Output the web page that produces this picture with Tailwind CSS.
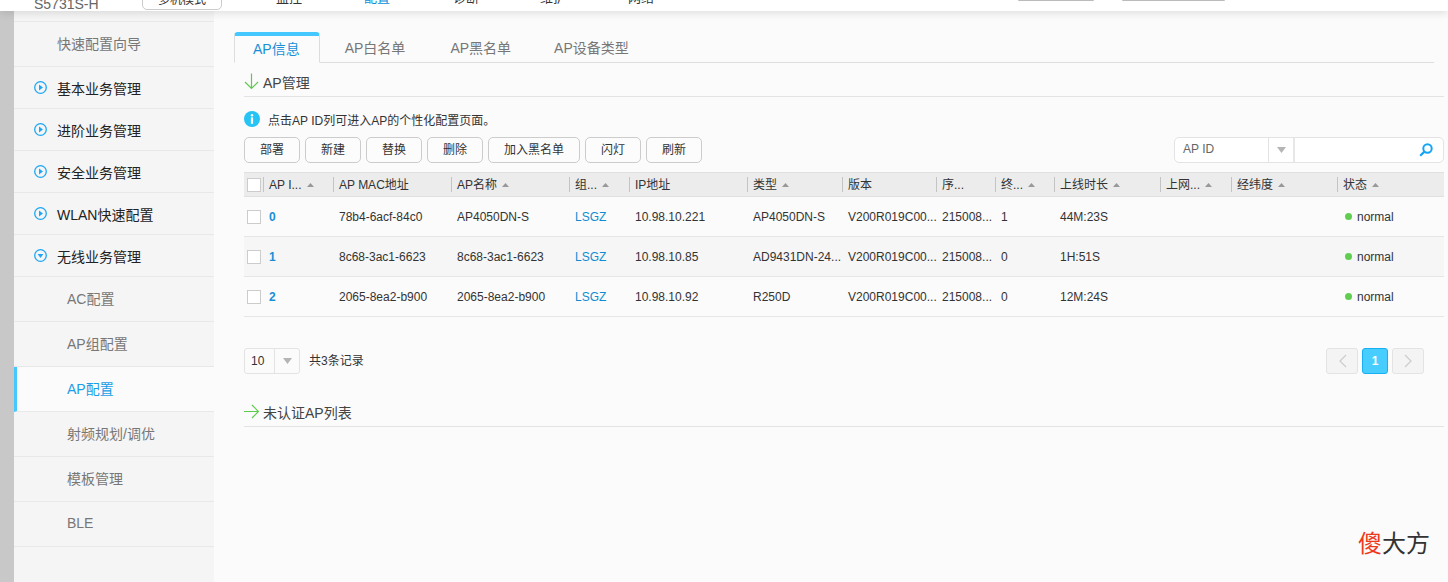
<!DOCTYPE html>
<html lang="zh">
<head>
<meta charset="utf-8">
<title>AP配置</title>
<script src="https://cdn.jsdelivr.net/npm/@tailwindcss/browser@4"></script>
</head>
<body class="w-[1448px] h-[582px] overflow-hidden bg-[#fbfbfb] font-['Liberation_Sans','Noto_Sans_CJK_SC',sans-serif] text-[12px] text-[#333]">
<div class="relative h-[582px] flex flex-col">
  <header class="relative z-10 h-[11px] shrink-0 overflow-hidden bg-white shadow-[0_2px_8px_rgba(0,0,0,0.12)] flex items-end text-[14px]">
    <span class="ml-[34px] w-[108px] text-[#666] leading-[20px] mb-[-3px] shrink-0">S5731S-H</span>
    <span class="w-[80px] h-[20px] mb-[1px] shrink-0 border border-[#ccc] rounded-[5px] text-[12px] text-[#333] leading-[18px] text-center">多机模式</span>
    <nav class="ml-[54px] flex leading-[20px] mb-[3px] text-[13px] text-[#333] shrink-0">
      <span class="w-[88px]">监控</span>
      <span class="w-[89px] text-[#0a8fd8]">配置</span>
      <span class="w-[87px]">诊断</span>
      <span class="w-[88px]">维护</span>
      <span class="w-[40px]">网络</span>
    </nav>
    <div class="ml-[350px] flex items-start self-start gap-[28px] shrink-0">
      <span class="w-[76px] h-[1px] bg-[#bbb] rounded-b"></span>
      <span class="w-[103px] h-[1px] bg-[#bbb] rounded-b"></span>
    </div>
  </header>
  <div class="flex flex-1 min-h-0">
    <div class="w-[14px] bg-[#c8c8c8] shrink-0"></div>
    <aside class="w-[200px] shrink-0 bg-[#f5f5f5] pt-[10px] text-[14px]">
      <div class="h-[46px] border-y border-[#e8e8e8] pl-[43px] flex items-center text-[#777]">快速配置向导</div>
      <div class="h-[42px] border-b border-[#e8e8e8] pl-[20px] pt-[3px] flex items-center gap-[10px] text-[#222]"><svg class="w-[13px] h-[13px] -mt-[3px]" viewBox="0 0 13 13"><circle cx="6.5" cy="6.5" r="5.8" fill="none" stroke="#1ea7f5" stroke-width="1.3"/><path d="M5 3.6 9 6.5 5 9.4z" fill="#1ea7f5"/></svg>基本业务管理</div>
      <div class="h-[42px] border-b border-[#e8e8e8] pl-[20px] pt-[3px] flex items-center gap-[10px] text-[#222]"><svg class="w-[13px] h-[13px] -mt-[3px]" viewBox="0 0 13 13"><circle cx="6.5" cy="6.5" r="5.8" fill="none" stroke="#1ea7f5" stroke-width="1.3"/><path d="M5 3.6 9 6.5 5 9.4z" fill="#1ea7f5"/></svg>进阶业务管理</div>
      <div class="h-[42px] border-b border-[#e8e8e8] pl-[20px] pt-[3px] flex items-center gap-[10px] text-[#222]"><svg class="w-[13px] h-[13px] -mt-[3px]" viewBox="0 0 13 13"><circle cx="6.5" cy="6.5" r="5.8" fill="none" stroke="#1ea7f5" stroke-width="1.3"/><path d="M5 3.6 9 6.5 5 9.4z" fill="#1ea7f5"/></svg>安全业务管理</div>
      <div class="h-[42px] border-b border-[#e8e8e8] pl-[20px] pt-[3px] flex items-center gap-[10px] text-[#222]"><svg class="w-[13px] h-[13px] -mt-[3px]" viewBox="0 0 13 13"><circle cx="6.5" cy="6.5" r="5.8" fill="none" stroke="#1ea7f5" stroke-width="1.3"/><path d="M5 3.6 9 6.5 5 9.4z" fill="#1ea7f5"/></svg>WLAN快速配置</div>
      <div class="h-[42px] border-b border-[#e8e8e8] pl-[20px] pt-[3px] flex items-center gap-[10px] text-[#222]"><svg class="w-[13px] h-[13px] -mt-[3px]" viewBox="0 0 13 13"><circle cx="6.5" cy="6.5" r="5.8" fill="none" stroke="#1ea7f5" stroke-width="1.3"/><path d="M3.6 5 9.4 5 6.5 9z" fill="#1ea7f5"/></svg>无线业务管理</div>
      <div class="h-[45px] border-b border-[#e8e8e8] pl-[53px] flex items-center text-[#777]">AC配置</div>
      <div class="h-[45px] border-b border-[#e8e8e8] pl-[53px] flex items-center text-[#777]">AP组配置</div>
      <div class="h-[45px] border-b border-[#e8e8e8] border-l-[3px] border-l-[#45c8ff] pl-[50px] flex items-center text-[#1a9ee6] bg-[#fbfbfb]">AP配置</div>
      <div class="h-[45px] border-b border-[#e8e8e8] pl-[53px] flex items-center text-[#777]">射频规划/调优</div>
      <div class="h-[45px] border-b border-[#e8e8e8] pl-[53px] flex items-center text-[#777]">模板管理</div>
      <div class="h-[45px] border-b border-[#e8e8e8] pl-[53px] pb-[2px] flex items-center text-[#777]">BLE</div>
    </aside>
    <main class="flex-1 min-w-0 pl-[20px] pr-[4px] pt-[21px]">
      <div class="flex h-[31px] mr-[10px] border-b border-[#ddd] text-[14px] text-[#777]">
        <div class="h-[31px] pl-[18px] pr-[19px] mr-[6px] border border-[#ddd] border-t-[4px] border-t-[#45c8ff] border-b-[#fbfbfb] rounded-t-[4px] text-[#1a8fd6] leading-[27px]">AP信息</div>
        <div class="px-[19px] mr-[7px] leading-[33px]">AP白名单</div>
        <div class="px-[19px] mr-[5px] leading-[33px]">AP黑名单</div>
        <div class="px-[19px] leading-[33px]">AP设备类型</div>
      </div>
      <div class="ml-[10px]">
        <div class="h-[34px] border-b border-[#e3e3e3] flex items-center text-[14px] text-[#444] pt-[7px]">
          <svg class="w-[15px] h-[17px] mr-[4px] -mt-[3px]" viewBox="0 0 15 17"><path d="M7.5 0.5V15.5M1 9 7.5 15.5 14 9" fill="none" stroke="#5ecb4c" stroke-width="1.2"/></svg>AP管理
        </div>
        <div class="h-[39px] flex items-center pt-[8px] text-[#333]">
          <svg class="w-[16px] h-[16px] mr-[8px] -mt-[3px]" viewBox="0 0 16 16"><circle cx="8" cy="8" r="8" fill="#25c4f5"/><circle cx="8" cy="4.2" r="1.2" fill="#fff"/><rect x="6.9" y="6.4" width="2.2" height="6.4" fill="#fff"/></svg>点击AP ID列可进入AP的个性化配置页面。
        </div>
        <div class="h-[26px] mt-[1px] flex justify-between">
          <div class="flex gap-[5px] text-[12px] text-[#333]">
            <button class="w-[56px] h-[26px] border border-[#ccc] rounded-[5px] bg-[#fcfcfc]">部署</button>
            <button class="w-[56px] h-[26px] border border-[#ccc] rounded-[5px] bg-[#fcfcfc]">新建</button>
            <button class="w-[56px] h-[26px] border border-[#ccc] rounded-[5px] bg-[#fcfcfc]">替换</button>
            <button class="w-[56px] h-[26px] border border-[#ccc] rounded-[5px] bg-[#fcfcfc]">删除</button>
            <button class="w-[92px] h-[26px] border border-[#ccc] rounded-[5px] bg-[#fcfcfc]">加入黑名单</button>
            <button class="w-[56px] h-[26px] border border-[#ccc] rounded-[5px] bg-[#fcfcfc]">闪灯</button>
            <button class="w-[56px] h-[26px] border border-[#ccc] rounded-[5px] bg-[#fcfcfc]">刷新</button>
          </div>
          <div class="w-[270px] h-[26px] border border-[#e3e3e3] rounded-[5px] bg-white flex items-center text-[#666]">
            <span class="w-[93px] pl-[8px] -mt-[2px]">AP ID</span>
            <span class="w-[25px] h-[24px] border-l border-[#e3e3e3] flex items-center justify-center"><svg class="w-[9px] h-[6px]" viewBox="0 0 9 6"><path d="M0 0H9L4.5 6z" fill="#b5b5b5"/></svg></span>
            <span class="flex-1 h-[24px] border-l-2 border-[#e8e8e8] flex items-center justify-end pr-[10px]"><svg class="w-[14px] h-[14px]" viewBox="0 0 14 14"><circle cx="8.5" cy="5.5" r="4.2" fill="none" stroke="#12a5f5" stroke-width="2"/><path d="M5.4 8.6 1.2 12.8" stroke="#12a5f5" stroke-width="2.2"/></svg></span>
          </div>
        </div>
        <table class="mt-[9px] w-[1200px] table-fixed border-collapse text-[12px] text-[#333]">
          <colgroup>
            <col class="w-[19px]"><col class="w-[70px]"><col class="w-[118px]"><col class="w-[118px]"><col class="w-[60px]"><col class="w-[118px]"><col class="w-[95px]"><col class="w-[94px]"><col class="w-[59px]"><col class="w-[59px]"><col class="w-[106px]"><col class="w-[71px]"><col class="w-[106px]"><col class="w-[107px]">
          </colgroup>
          <thead>
            <tr class="h-[24px] bg-[#ececec] border-y border-[#e0e0e0] font-normal text-left">
              <th class="font-normal p-0"><span class="ml-[3px] block w-[14px] h-[14px] border border-[#ccc] bg-white"></span></th>
              <th class="font-normal p-0"><div class="h-[15px] border-l border-[#c4c4c4] pl-[5px] flex items-center gap-[6px] whitespace-nowrap">AP I...<svg class="w-[7px] h-[4px]" viewBox="0 0 7 4"><path d="M0 4H7L3.5 0z" fill="#999"/></svg></div></th>
              <th class="font-normal p-0"><div class="h-[15px] border-l border-[#c4c4c4] pl-[5px] flex items-center whitespace-nowrap">AP MAC地址</div></th>
              <th class="font-normal p-0"><div class="h-[15px] border-l border-[#c4c4c4] pl-[5px] flex items-center gap-[5px] whitespace-nowrap">AP名称<svg class="w-[7px] h-[4px]" viewBox="0 0 7 4"><path d="M0 4H7L3.5 0z" fill="#999"/></svg></div></th>
              <th class="font-normal p-0"><div class="h-[15px] border-l border-[#c4c4c4] pl-[5px] flex items-center gap-[5px] whitespace-nowrap">组...<svg class="w-[7px] h-[4px]" viewBox="0 0 7 4"><path d="M0 4H7L3.5 0z" fill="#999"/></svg></div></th>
              <th class="font-normal p-0"><div class="h-[15px] border-l border-[#c4c4c4] pl-[5px] flex items-center whitespace-nowrap">IP地址</div></th>
              <th class="font-normal p-0"><div class="h-[15px] border-l border-[#c4c4c4] pl-[5px] flex items-center gap-[5px] whitespace-nowrap">类型<svg class="w-[7px] h-[4px]" viewBox="0 0 7 4"><path d="M0 4H7L3.5 0z" fill="#999"/></svg></div></th>
              <th class="font-normal p-0"><div class="h-[15px] border-l border-[#c4c4c4] pl-[5px] flex items-center whitespace-nowrap">版本</div></th>
              <th class="font-normal p-0"><div class="h-[15px] border-l border-[#c4c4c4] pl-[5px] flex items-center whitespace-nowrap">序...</div></th>
              <th class="font-normal p-0"><div class="h-[15px] border-l border-[#c4c4c4] pl-[5px] flex items-center gap-[5px] whitespace-nowrap">终...<svg class="w-[7px] h-[4px]" viewBox="0 0 7 4"><path d="M0 4H7L3.5 0z" fill="#999"/></svg></div></th>
              <th class="font-normal p-0"><div class="h-[15px] border-l border-[#c4c4c4] pl-[5px] flex items-center gap-[5px] whitespace-nowrap">上线时长<svg class="w-[7px] h-[4px]" viewBox="0 0 7 4"><path d="M0 4H7L3.5 0z" fill="#999"/></svg></div></th>
              <th class="font-normal p-0"><div class="h-[15px] border-l border-[#c4c4c4] pl-[5px] flex items-center gap-[5px] whitespace-nowrap">上网...<svg class="w-[7px] h-[4px]" viewBox="0 0 7 4"><path d="M0 4H7L3.5 0z" fill="#999"/></svg></div></th>
              <th class="font-normal p-0"><div class="h-[15px] border-l border-[#c4c4c4] pl-[5px] flex items-center gap-[5px] whitespace-nowrap">经纬度<svg class="w-[7px] h-[4px]" viewBox="0 0 7 4"><path d="M0 4H7L3.5 0z" fill="#999"/></svg></div></th>
              <th class="font-normal p-0"><div class="h-[15px] border-l border-[#c4c4c4] pl-[5px] flex items-center gap-[5px] whitespace-nowrap">状态<svg class="w-[7px] h-[4px]" viewBox="0 0 7 4"><path d="M0 4H7L3.5 0z" fill="#999"/></svg></div></th>
            </tr>
          </thead>
          <tbody>
            <tr class="h-[40px] border-b border-[#e6e6e6]">
              <td class="p-0"><span class="ml-[3px] block w-[14px] h-[14px] border border-[#ccc] bg-white"></span></td>
              <td class="p-0 pl-[6px] text-[#1a8fd6] font-bold">0</td><td class="p-0 pl-[6px]">78b4-6acf-84c0</td><td class="p-0 pl-[6px]">AP4050DN-S</td><td class="p-0 pl-[6px] text-[#0f8cd2]">LSGZ</td><td class="p-0 pl-[6px]">10.98.10.221</td><td class="p-0 pl-[6px] whitespace-nowrap">AP4050DN-S</td><td class="p-0 pl-[6px] whitespace-nowrap">V200R019C00...</td><td class="p-0 pl-[6px] whitespace-nowrap">215008...</td><td class="p-0 pl-[6px]">1</td><td class="p-0 pl-[6px]">44M:23S</td><td class="p-0"></td><td class="p-0"></td>
              <td class="p-0 pl-[8px]"><span class="flex items-center gap-[5px]"><span class="w-[7px] h-[7px] rounded-full bg-[#5fce50]"></span>normal</span></td>
            </tr>
            <tr class="h-[40px] border-b border-[#e6e6e6] bg-[#f6f6f6]">
              <td class="p-0"><span class="ml-[3px] block w-[14px] h-[14px] border border-[#ccc] bg-white"></span></td>
              <td class="p-0 pl-[6px] text-[#1a8fd6] font-bold">1</td><td class="p-0 pl-[6px]">8c68-3ac1-6623</td><td class="p-0 pl-[6px]">8c68-3ac1-6623</td><td class="p-0 pl-[6px] text-[#0f8cd2]">LSGZ</td><td class="p-0 pl-[6px]">10.98.10.85</td><td class="p-0 pl-[6px] whitespace-nowrap">AD9431DN-24...</td><td class="p-0 pl-[6px] whitespace-nowrap">V200R019C00...</td><td class="p-0 pl-[6px] whitespace-nowrap">215008...</td><td class="p-0 pl-[6px]">0</td><td class="p-0 pl-[6px]">1H:51S</td><td class="p-0"></td><td class="p-0"></td>
              <td class="p-0 pl-[8px]"><span class="flex items-center gap-[5px]"><span class="w-[7px] h-[7px] rounded-full bg-[#5fce50]"></span>normal</span></td>
            </tr>
            <tr class="h-[40px] border-b border-[#e6e6e6]">
              <td class="p-0"><span class="ml-[3px] block w-[14px] h-[14px] border border-[#ccc] bg-white"></span></td>
              <td class="p-0 pl-[6px] text-[#1a8fd6] font-bold">2</td><td class="p-0 pl-[6px]">2065-8ea2-b900</td><td class="p-0 pl-[6px]">2065-8ea2-b900</td><td class="p-0 pl-[6px] text-[#0f8cd2]">LSGZ</td><td class="p-0 pl-[6px]">10.98.10.92</td><td class="p-0 pl-[6px] whitespace-nowrap">R250D</td><td class="p-0 pl-[6px] whitespace-nowrap">V200R019C00...</td><td class="p-0 pl-[6px] whitespace-nowrap">215008...</td><td class="p-0 pl-[6px]">0</td><td class="p-0 pl-[6px]">12M:24S</td><td class="p-0"></td><td class="p-0"></td>
              <td class="p-0 pl-[8px]"><span class="flex items-center gap-[5px]"><span class="w-[7px] h-[7px] rounded-full bg-[#5fce50]"></span>normal</span></td>
            </tr>
          </tbody>
        </table>
        <div class="mt-[31px] h-[26px] flex items-center">
          <div class="w-[56px] h-[26px] border border-[#e3e3e3] rounded-[3px] flex items-center text-[#333]">
            <span class="w-[29px] pl-[6px]">10</span>
            <span class="flex-1 h-[24px] border-l border-[#e3e3e3] flex items-center justify-center"><svg class="w-[9px] h-[6px]" viewBox="0 0 9 6"><path d="M0 0H9L4.5 6z" fill="#b5b5b5"/></svg></span>
          </div>
          <span class="ml-[9px]">共3条记录</span>
          <div class="ml-auto mr-[20px] flex gap-[4px]">
            <span class="w-[32px] h-[26px] border border-[#e3e3e3] rounded-[3px] bg-[#f4f4f4] flex items-center justify-center"><svg class="w-[9px] h-[14px]" viewBox="0 0 9 14"><path d="M8 1 2 7 8 13" fill="none" stroke="#ccc" stroke-width="1.2"/></svg></span>
            <span class="w-[26px] h-[26px] border border-[#18b0f5] rounded-[3px] bg-[#47cdff] text-white font-bold flex items-center justify-center">1</span>
            <span class="w-[32px] h-[26px] border border-[#e3e3e3] rounded-[3px] bg-[#f4f4f4] flex items-center justify-center"><svg class="w-[9px] h-[14px]" viewBox="0 0 9 14"><path d="M1 1 7 7 1 13" fill="none" stroke="#ccc" stroke-width="1.2"/></svg></span>
          </div>
        </div>
        <div class="mt-[22px] h-[31px] border-b border-[#e3e3e3] flex items-center text-[14px] text-[#444] pt-[4px]">
          <svg class="w-[15px] h-[15px] mr-[4px] -mt-[4px]" viewBox="0 0 15 15"><path d="M0 7.5H14.5M8 1 14.5 7.5 8 14" fill="none" stroke="#5ecb4c" stroke-width="1.2"/></svg>未认证AP列表
        </div>
      </div>
    </main>
  </div>
  <div class="absolute left-[1358px] top-[528px] text-[24px] leading-[32px] text-[#333]"><span class="text-[#ee3a1c]">傻</span>大方</div>
</div>
</body>
</html>
